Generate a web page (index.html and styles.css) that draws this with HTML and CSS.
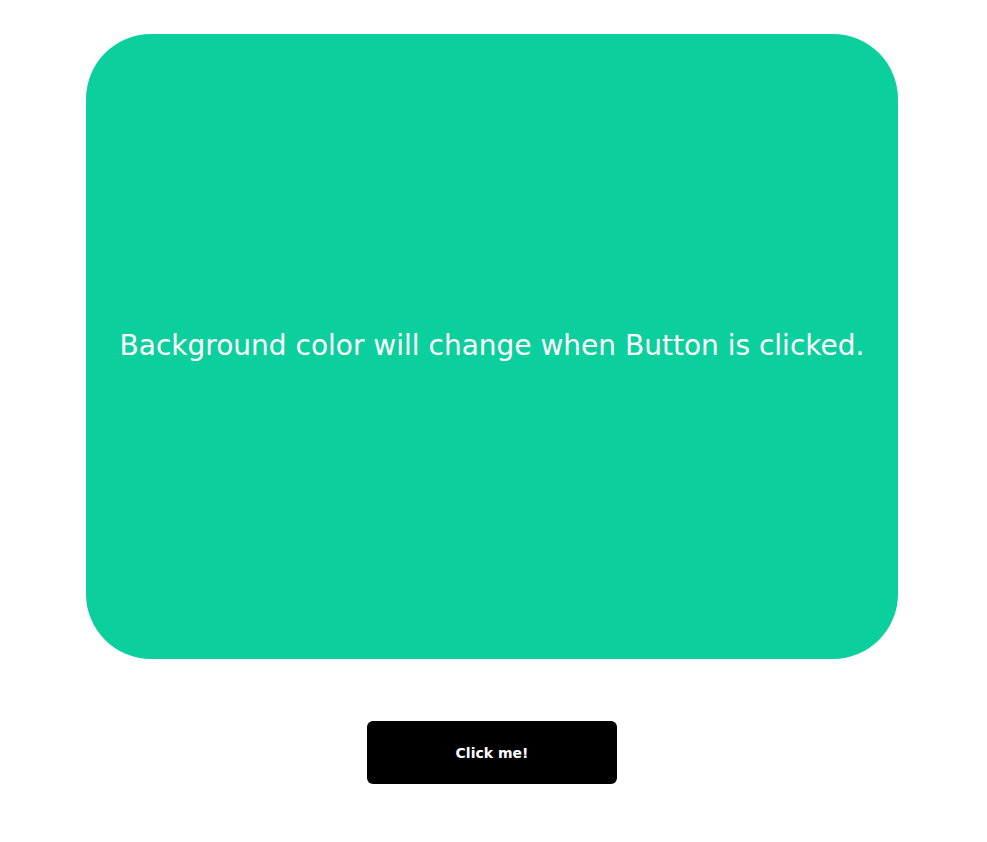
FILE: index.html
```html
<!DOCTYPE html>
<html>
<head>
<meta charset="utf-8">
<link rel="stylesheet" href="styles.css">
</head>
<body>
<main class="page">
  <section class="panel">
    <p class="panel-text">Background color will change when Button is clicked.</p>
  </section>
  <button class="btn" type="button">Click me!</button>
</main>
</body>
</html>
```
FILE: styles.css
```css
html, body {
  margin: 0;
  padding: 0;
  background: #fff;
}
.page {
  display: flex;
  flex-direction: column;
  align-items: center;
  padding: 34px 3px 0 0;
  gap: 62px;
  font-family: "DejaVu Sans", sans-serif;
}
.panel {
  width: 812px;
  height: 625px;
  border-radius: 65px;
  background: #0bcf9c;
  display: flex;
  align-items: center;
  justify-content: center;
}
.panel-text {
  margin: 0;
  color: #fff;
  font-size: 28px;
  transform: translateY(-1px);
}
.btn {
  width: 250px;
  height: 63px;
  border: none;
  border-radius: 6px;
  background: #000;
  color: #fff;
  font-family: "DejaVu Sans", sans-serif;
  font-weight: bold;
  font-size: 14px;
}
```
